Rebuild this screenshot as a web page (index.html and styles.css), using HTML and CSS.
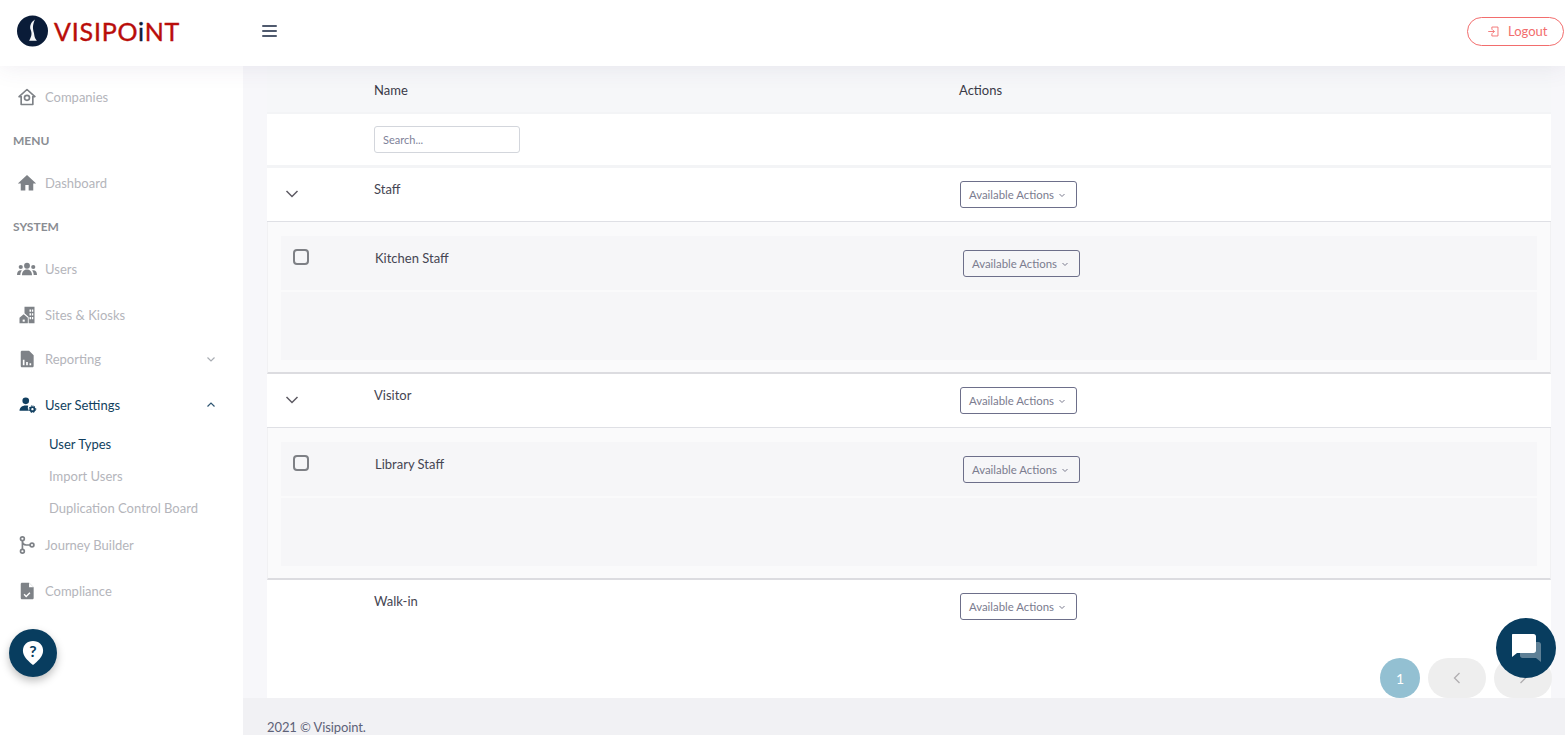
FILE: index.html
```html
<!DOCTYPE html>
<html lang="en">
<head>
<meta charset="utf-8">
<title>Visipoint - User Types</title>
<link rel="stylesheet" href="styles.css">
</head>
<body>
<div class="app">
  <header class="topbar">
    <div class="brand">
      <svg class="brand-mark" viewBox="0 0 32 32"><circle cx="16" cy="16" r="16" fill="#0a1c38"/><path d="M18.500 4C14 7 13 11 14 14.500 15.500 18 15.500 21 12.500 26L20.500 26C18 23 18 21 17.500 18 16.500 14 15.500 11 18.500 4z" fill="#f4f6f8"/></svg>
      <span class="brand-name">VISIPO<span class="brand-i">i</span>NT</span>
    </div>
    <button class="burger" aria-label="Menu"><span></span><span></span><span></span></button>
    <button class="logout">
      <svg viewBox="0 0 16 16" class="logout-icon"><path d="M6 2.500h7.500v11H6M6 2.500v3M6 13.500v-3M1.500 8h7.500M6.500 5.500 9 8l-2.500 2.500" fill="none" stroke="currentColor" stroke-width="1.100"/></svg>
      Logout
    </button>
  </header>
  <div class="body">
    <aside class="sidebar">
      <a class="nav-item">
        <svg class="nav-icon" viewBox="0 0 24 24"><path d="M12 3 2.500 11.500H5V21h14V11.500h2.500z" fill="none" stroke="#7e8287" stroke-width="2" stroke-linejoin="round"/><circle cx="12" cy="13" r="3" fill="none" stroke="#7e8287" stroke-width="2"/></svg>
        <span>Companies</span>
      </a>
      <div class="nav-title">MENU</div>
      <a class="nav-item">
        <svg class="nav-icon" viewBox="0 0 24 24"><path d="M10 21v-6.500h4V21h5.500v-8.500H23L12 2.500 1 12.500h3.500V21z" fill="#7e8287"/></svg>
        <span>Dashboard</span>
      </a>
      <div class="nav-title">SYSTEM</div>
      <a class="nav-item">
        <svg class="nav-icon wide" viewBox="0 0 24 18"><circle cx="12" cy="4.500" r="3.500" fill="#7e8287"/><circle cx="4.500" cy="6" r="2.500" fill="#7e8287"/><circle cx="19.500" cy="6" r="2.500" fill="#7e8287"/><path d="M6 16c0-4 2-7 6-7s6 3 6 7zM0 15.500c0-3 1.500-5.500 4.500-5.500.6 0 1 .1 1.300.2C4.600 11.500 4 13.500 4 15.500zM24 15.500c0-3-1.500-5.500-4.500-5.500-.6 0-1 .1-1.300.2 1.200 1.300 1.800 3.300 1.800 5.300z" fill="#7e8287"/></svg>
        <span>Users</span>
      </a>
      <a class="nav-item">
        <svg class="nav-icon" viewBox="0 0 24 24"><path fill-rule="evenodd" d="M9 2h12v20h-7v-7.500L9 10zM15 5.500h2v2.500h-2zM18 5.500h1.500v2.500H18zM15 10h2v2.500h-2zM18 10h1.500v2.500H18zM15 14.500h2V17h-2zM18 14.500h1.500V17H18z" fill="#7e8287"/><path d="M8 11 3 15.200V22h10v-6.800z" fill="#7e8287"/><path d="M6.800 17.500h2.500V20H6.800z" fill="#fff"/></svg>
        <span>Sites &amp; Kiosks</span>
      </a>
      <a class="nav-item short">
        <svg class="nav-icon" viewBox="0 0 24 24"><path fill-rule="evenodd" d="M6 2h8.500L20 7.500V20.500c0 1-.8 1.500-1.500 1.500H6c-.8 0-1.500-.5-1.500-1.500v-17C4.500 2.700 5.200 2 6 2zM7 13v6.500h2V13zM11 15.500v4h2v-4zM15 17v2.500h2V17z" fill="#7e8287"/></svg>
        <span>Reporting</span>
        <svg class="nav-caret" viewBox="0 0 12 12"><path d="M2.500 4.500 6 8l3.500-3.500" fill="none" stroke="#a9adb3" stroke-width="1.200"/></svg>
      </a>
      <a class="nav-item active">
        <svg class="nav-icon" viewBox="0 0 24 24"><circle cx="10.500" cy="7" r="4" fill="#113f60"/><path d="M3 19c0-4 3-6.500 7.500-6.500 1.200 0 2.300.2 3 .5-.9 1.700-.6 4.300.8 6z" fill="#113f60"/><circle cx="18.500" cy="17" r="2.500" fill="none" stroke="#113f60" stroke-width="2.200"/><circle cx="18.500" cy="17" r="4" fill="none" stroke="#113f60" stroke-width="1.200" stroke-dasharray="1.800 1.500"/></svg>
        <span>User Settings</span>
        <svg class="nav-caret" viewBox="0 0 12 12"><path d="M2.500 7.500 6 4l3.500 3.500" fill="none" stroke="#2f5672" stroke-width="1.200"/></svg>
      </a>
      <div class="subnav">
        <a class="sub-item current">User Types</a>
        <a class="sub-item">Import Users</a>
        <a class="sub-item">Duplication Control Board</a>
      </div>
      <a class="nav-item">
        <svg class="nav-icon" viewBox="0 0 24 24"><g fill="none" stroke="#7e8287" stroke-width="2"><circle cx="6.500" cy="4.500" r="2.300"/><circle cx="6.500" cy="19.500" r="2.300"/><circle cx="18" cy="12" r="2.300"/><path d="M6.500 6.800v10.400M6.500 7c0 3 2 5 4.500 5h4.700"/></g></svg>
        <span>Journey Builder</span>
      </a>
      <a class="nav-item">
        <svg class="nav-icon" viewBox="0 0 24 24"><path fill-rule="evenodd" d="M6 2h8.500L20 7.500V20.500c0 1-.8 1.500-1.500 1.500H6c-.8 0-1.500-.5-1.500-1.500v-17C4.500 2.700 5.200 2 6 2z" fill="#7e8287"/><path d="m8.500 16 2.500 2.500 4.500-4.500" fill="none" stroke="#fff" stroke-width="1.700"/><path d="M14.500 2v5.500H20z" fill="#fff"/></svg>
        <span>Compliance</span>
      </a>
    </aside>
    <main class="main">
      <section class="card">
        <div class="row head"><span></span><span>Name</span><span>Actions</span></div>
        <div class="row search-row"><span></span><input class="search" placeholder="Search..."></div>

        <div class="row group">
          <svg class="chev" viewBox="0 0 14 14"><path d="M1.500 4 7 9.500 12.500 4" fill="none" stroke="#5d5a63" stroke-width="1.500"/></svg>
          <span class="cell">Staff</span>
          <button class="actions">Available Actions <svg viewBox="0 0 8 8"><path d="M1.500 3 4 5.500 6.500 3" fill="none" stroke="currentColor"/></svg></button>
        </div>
        <div class="panel">
          <div class="subrow">
            <span class="check"></span>
            <span class="cell">Kitchen Staff</span>
            <button class="actions">Available Actions <svg viewBox="0 0 8 8"><path d="M1.500 3 4 5.500 6.500 3" fill="none" stroke="currentColor"/></svg></button>
          </div>
          <div class="subempty"></div>
        </div>

        <div class="row group">
          <svg class="chev" viewBox="0 0 14 14"><path d="M1.500 4 7 9.500 12.500 4" fill="none" stroke="#5d5a63" stroke-width="1.500"/></svg>
          <span class="cell">Visitor</span>
          <button class="actions">Available Actions <svg viewBox="0 0 8 8"><path d="M1.500 3 4 5.500 6.500 3" fill="none" stroke="currentColor"/></svg></button>
        </div>
        <div class="panel">
          <div class="subrow">
            <span class="check"></span>
            <span class="cell">Library Staff</span>
            <button class="actions">Available Actions <svg viewBox="0 0 8 8"><path d="M1.500 3 4 5.500 6.500 3" fill="none" stroke="currentColor"/></svg></button>
          </div>
          <div class="subempty"></div>
        </div>

        <div class="row group plain">
          <span></span>
          <span class="cell">Walk-in</span>
          <button class="actions">Available Actions <svg viewBox="0 0 8 8"><path d="M1.500 3 4 5.500 6.500 3" fill="none" stroke="currentColor"/></svg></button>
        </div>

        <nav class="pager">
          <span class="page-num">1</span>
          <span class="page-btn"><svg viewBox="0 0 12 12"><path d="M8.500 1 3.500 6l5 5" fill="none" stroke="#b0aeb0" stroke-width="1.300"/></svg></span>
          <span class="page-btn"><svg viewBox="0 0 12 12"><path d="M3.500 1 8.500 6l-5 5" fill="none" stroke="#b0aeb0" stroke-width="1.300"/></svg></span>
        </nav>
      </section>
      <footer class="footer">2021 © Visipoint.</footer>
    </main>
  </div>
  <button class="help" aria-label="Help">
    <svg class="help-pin" viewBox="0 0 24 28"><path d="M12 1C5.500 1 1 5.500 1 11.500 1 18 7.500 23.500 12 27c4.500-3.500 11-9 11-15.500C23 5.500 18.500 1 12 1z" fill="#fff"/></svg>
    <span class="help-mark">?</span>
  </button>
  <button class="chat" aria-label="Chat">
    <svg viewBox="0 0 32 30"><path d="M10 9h18.500c1.500 0 2.500 1 2.500 2.500V29l-5-4H12.500C11 25 10 24 10 22.500z" fill="#fff" fill-opacity=".35"/><path d="M2.500 1h21C25 1 26 2 26 3.500v14c0 1.500-1 2.500-2.500 2.500H7l-5 4V3C2 2 2 1 2.500 1z" fill="#fff"/></svg>
  </button>
</div>
</body>
</html>
```
FILE: styles.css
```css
* { box-sizing: border-box; }
html, body { margin: 0; height: 100%; overflow: hidden; }
body { font-family: "Lato", "Liberation Sans", sans-serif; font-size: 13px; color: #3f4254; background: #f7f7fa; }
button { font-family: inherit; }

.app { position: relative; display: flex; flex-direction: column; height: 735px; }

.topbar { position: relative; z-index: 2; flex: none; display: flex; align-items: center; height: 66px; padding-bottom: 4px; background: #fff; box-shadow: 0 0 26px rgba(82, 63, 105, .1); }
.brand { display: flex; align-items: center; width: 262px; padding-left: 17px; gap: 6px; }
.brand-mark { width: 31px; height: 32px; flex: none; }
.brand-name { font-size: 25px; line-height: 32px; letter-spacing: .8px; color: #b90d0a; -webkit-text-stroke: .4px #b90d0a; }
.brand-i { color: #0a1c38; -webkit-text-stroke: .4px #0a1c38; }
.burger { display: flex; flex-direction: column; gap: 3px; width: 15px; padding: 0; background: none; border: 0; }
.burger span { display: block; height: 2px; background: #4f5a6e; border-radius: 1px; }
.logout { display: flex; align-items: center; gap: 8px; margin-left: auto; margin-right: 1px; width: 97px; height: 29px; padding: 0 0 0 19px; background: #fff; border: 1px solid #f26d6d; border-radius: 15px; color: #f26d6d; font-size: 13px; }
.logout-icon { width: 13px; height: 13px; }

.body { flex: 1; display: flex; min-height: 0; }

.sidebar { flex: none; width: 243px; padding-top: 8px; background: #fff; }
.nav-item { display: flex; align-items: center; height: 46px; padding-left: 17px; color: #b4b5bb; font-size: 13px; }
.nav-item.short { height: 42px; margin-bottom: 2px; }
.nav-item.active { color: #113f60; }
.nav-icon { width: 20px; height: 20px; margin-right: 8px; flex: none; }
.nav-icon.wide { width: 20px; height: 15px; }
.nav-caret { width: 12px; height: 12px; margin-left: auto; margin-right: 26px; }
.nav-title { display: flex; align-items: center; height: 42px; margin-bottom: -2px; padding: 0 0 2px 13px; font-size: 12px; font-weight: 700; color: #8a8d93; }
.subnav { display: flex; flex-direction: column; margin-bottom: -2px; }
.sub-item { display: flex; align-items: center; height: 32px; padding-left: 49px; color: #b4b5bb; font-size: 13px; }
.sub-item.current { color: #113f60; }

.main { flex: 1; display: flex; flex-direction: column; min-width: 0; }
.card { flex: 1; display: flex; flex-direction: column; margin: 0 14px 0 24px; background: #fff; min-height: 0; }
.row { display: grid; grid-template-columns: 107px 585px 1fr; }
.head { height: 48px; padding-top: 2px; align-items: center; color: #3a3a48; background: #f6f7f9; border-bottom: 2px solid #f3f4f6; }
.search-row { height: 54px; align-items: center; border-bottom: 3px solid #f3f4f6; }
.search { width: 146px; height: 27px; padding: 0 8px; border: 1px solid #d3d6dc; border-radius: 3px; font-family: inherit; font-size: 11px; color: #7e8299; outline: 0; }
.search::placeholder { color: #7e8299; opacity: 1; }
.group { height: 54px; align-items: start; border-bottom: 1px solid #dfe0e5; }
.group.plain { border-bottom: 0; }
.group .cell { padding-top: 11px; }
.cell { line-height: 20px; color: #454552; }
.chev { width: 14px; height: 14px; margin: 19px 0 0 18px; }
.actions { display: flex; align-items: center; justify-content: center; gap: 4px; width: 117px; height: 27px; margin-top: 13px; margin-left: 1px; padding: 0 2px 0 0; background: transparent; border: 1px solid #6d6f8a; border-radius: 3px; font-size: 11.400px; color: #7b7c8f; }
.actions svg { width: 8px; height: 8px; }
.panel { height: 152px; padding: 14px 13px 12px; background: #fafafb; border-left: 1px solid #f1f1f3; border-right: 1px solid #f1f1f3; border-bottom: 2px solid #dcdce0; }
.subrow { display: grid; grid-template-columns: 94px 588px 1fr; height: 54px; background: #f6f6f8; }
.subrow .cell { padding-top: 12px; }
.subrow .actions { margin-top: 14px; margin-left: 0; }
.check { width: 16px; height: 16px; margin: 13px 0 0 12px; border: 2px solid #7e8085; border-radius: 4px; }
.subempty { height: 68px; margin-top: 2px; background: #f6f6f8; }

.pager { display: flex; justify-content: flex-end; gap: 8px; margin-top: auto; }
.page-num { display: flex; align-items: center; justify-content: center; width: 40px; height: 40px; border-radius: 50%; background: #93c0d2; color: #fff; font-size: 14px; }
.page-btn { display: flex; align-items: center; justify-content: center; width: 58px; height: 40px; border-radius: 20px; background: #eeeeee; }
.page-btn svg { width: 12px; height: 12px; }
.page-btn:last-child { margin-right: -1px; }

.footer { flex: none; height: 37px; padding: 21px 0 0 24px; background: #f1f1f4; color: #5e6278; font-size: 13px; line-height: 16px; letter-spacing: -.1px; }

.help { position: absolute; left: 9px; top: 629px; width: 48px; height: 48px; padding: 0; border: 0; border-radius: 50%; background: #083d5f; box-shadow: 0 4px 8px rgba(0, 0, 0, .25); }
.help-pin { position: absolute; left: 13px; top: 10px; width: 22px; height: 28px; }
.help-mark { position: absolute; left: 0; right: 0; top: 13px; text-align: center; font-size: 16px; line-height: 18px; font-weight: 700; color: #083d5f; }
.chat { position: absolute; left: 1496px; top: 618px; display: flex; align-items: center; justify-content: center; width: 60px; height: 60px; padding: 0; border: 0; border-radius: 50%; background: #083d5f; }
.chat svg { width: 32px; height: 30px; }
```
